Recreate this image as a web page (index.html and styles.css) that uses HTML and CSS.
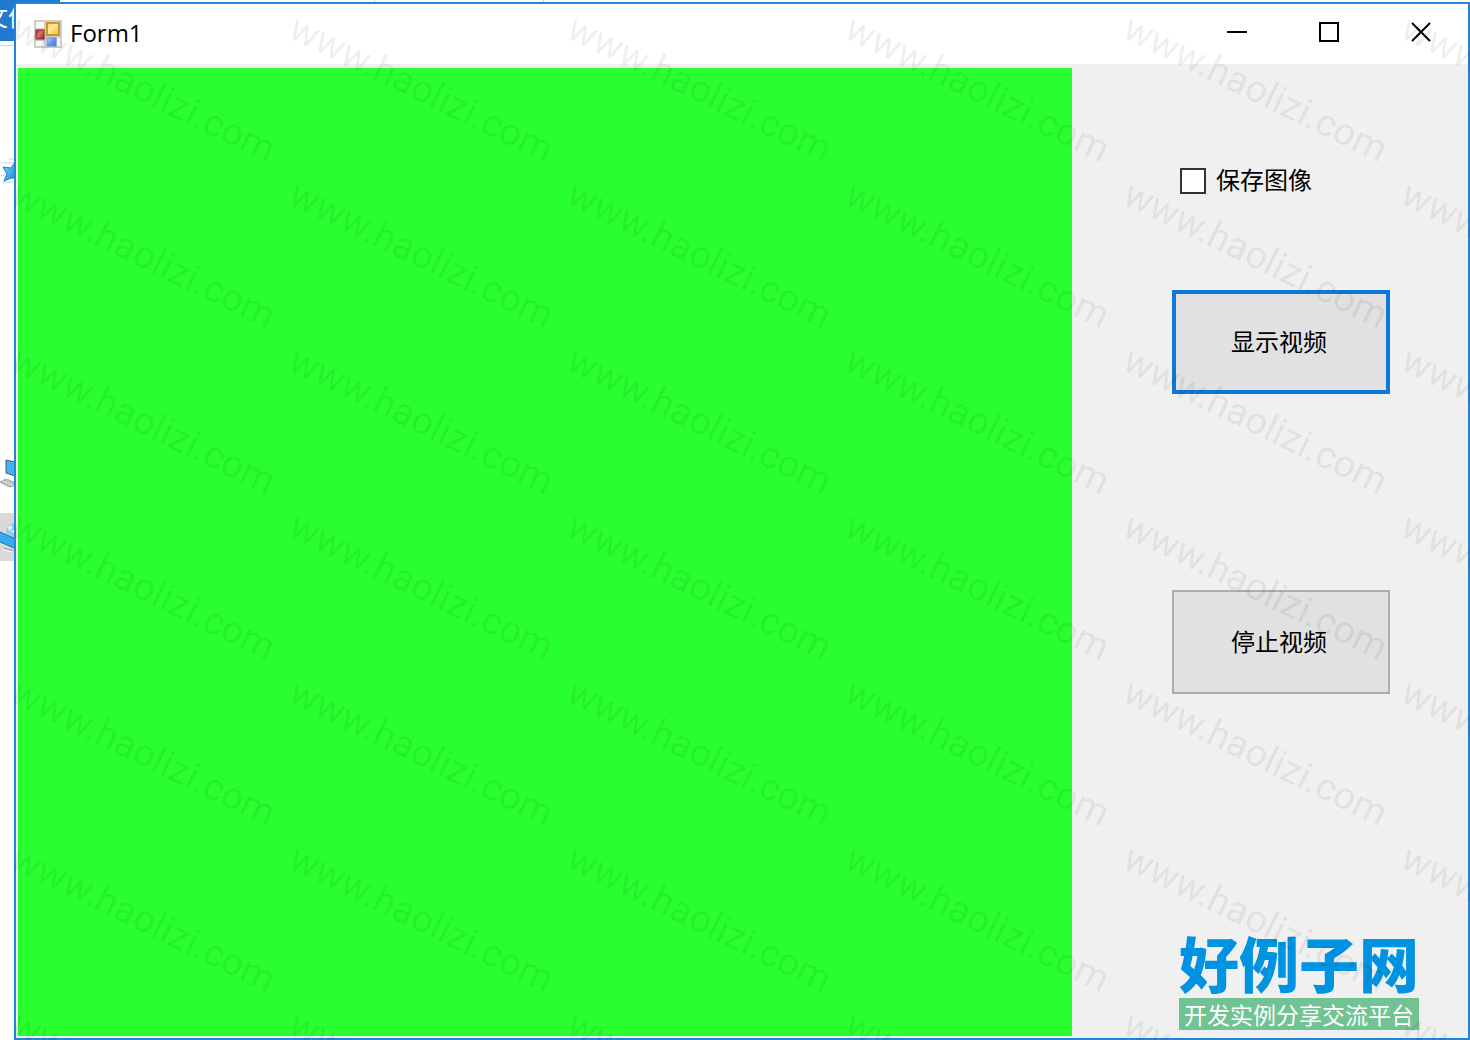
FILE: index.html
```html
<!DOCTYPE html>
<html lang="zh-CN">

<head>
  <meta charset="utf-8">
  <title>Form1</title>
  <link rel="stylesheet" href="styles.css">
</head>

<body>

  <!-- File explorer behind the form, only its left edge is visible. -->
  <div class="explorer">
    <div class="tabs">
      <span class="tab-file">文件</span>
      <span class="tab"></span>
      <span class="tab"></span>
    </div>
    <div class="tree">
      <svg class="tree-icon quick" viewBox="0 0 14 48" aria-hidden="true">
        <defs>
          <linearGradient id="sky" x1="0" y1="0" x2="1" y2="1">
            <stop offset="0" stop-color="#7fd4fb" />
            <stop offset="1" stop-color="#168fe0" />
          </linearGradient>
        </defs>
        <path d="M9 13h5M1 17h13M0 29h5M2 36h12" stroke="#b5d9f1" />
        <path d="M3 21l8 1 4-6v16l-4 0-7 3 3-7z" fill="url(#sky)" stroke="#1c7fc4" />
      </svg>
      <svg class="tree-icon pc" viewBox="0 0 14 48" aria-hidden="true">
        <path d="M6 12l9 2v14l-9-3z" fill="#3fb4f5" stroke="#4a5a66" />
        <path d="M0 34l6-3 8 3v4l-5 1z" fill="#d5d9dc" stroke="#a4abb0" />
        <path d="M1 34l10 4M4 32l10 4" stroke="#8f979d" stroke-dasharray="2 1" />
      </svg>
      <svg class="tree-icon network" viewBox="0 0 14 48" aria-hidden="true">
        <path d="M14 10q-8 2-8 10l8 4z" fill="#8dccea" />
        <path d="M8 14l3-2 1 3-3 3zM11 18l3-1v3z" fill="#e6f6fd" />
        <path d="M0 19l14 6v10l-14-6z" fill="#35abf2" />
        <path d="M0 19l14 6M0 29l14 6" stroke="#2c6f9e" fill="none" />
        <path d="M4 35l10 3" stroke="#8b959b" />
        <path d="M3 37l11 2" stroke="#f7f7f7" />
      </svg>
    </div>
  </div>

  <main class="window">
    <header class="titlebar">
      <svg class="app-icon" viewBox="0 0 28 28" aria-hidden="true">
        <defs>
          <linearGradient id="gold" x1="0" y1="0" x2="1" y2="1">
            <stop offset="0" stop-color="#f5cf58" />
            <stop offset=".4" stop-color="#ffe999" />
            <stop offset="1" stop-color="#eeb52c" />
          </linearGradient>
          <linearGradient id="red" x1="0" y1="0" x2="1" y2="1">
            <stop offset="0" stop-color="#b8231f" />
            <stop offset=".4" stop-color="#dd7a70" />
            <stop offset="1" stop-color="#a41613" />
          </linearGradient>
          <linearGradient id="blue" x1="0" y1="0" x2="1" y2="1">
            <stop offset="0" stop-color="#a9c9fb" />
            <stop offset="1" stop-color="#3f78dc" />
          </linearGradient>
        </defs>
        <rect x="1" y="1" width="26" height="26" fill="#f8f8f8" stroke="#cdcdcd" stroke-width="2" />
        <path d="M11 1v26M1 9h11M1 20h11M11 17h16M22 17v10" stroke="#cdcdcd" stroke-width="2" />
        <rect x="13" y="3" width="12" height="12" fill="url(#gold)" stroke="#c9992b" stroke-width="2" />
        <rect x="2" y="10" width="8" height="9" fill="url(#red)" stroke="#97201c" />
        <rect x="13" y="18" width="9" height="8" fill="url(#blue)" stroke="#6d94dc" />
      </svg>
      <h1 class="caption">Form1</h1>
      <button class="caption-btn" type="button" aria-label="Minimize">
        <svg viewBox="0 0 20 20"><path d="M0 10h20" /></svg>
      </button>
      <button class="caption-btn" type="button" aria-label="Maximize">
        <svg viewBox="0 0 20 20"><path d="M1 1h18v18H1z" /></svg>
      </button>
      <button class="caption-btn" type="button" aria-label="Close">
        <svg viewBox="0 0 20 20"><path d="M1 1l18 18M19 1L1 19" /></svg>
      </button>
    </header>

    <div class="client">
      <div class="video"></div>

      <div class="panel">
        <label class="check" for="saveImage">
          <input id="saveImage" type="checkbox">
          <span>保存图像</span>
        </label>
        <button class="btn btn-default" type="button">显示视频</button>
        <button class="btn" type="button">停止视频</button>

        <div class="brand">
          <div class="brand-name">好例子网</div>
          <div class="brand-slogan">开发实例分享交流平台</div>
        </div>
      </div>
    </div>
  </main>

  <div class="watermark" aria-hidden="true">
    <span>www.haolizi.com</span><span>www.haolizi.com</span><span>www.haolizi.com</span><span>www.haolizi.com</span><span>www.haolizi.com</span><span>www.haolizi.com</span>
    <span>www.haolizi.com</span><span>www.haolizi.com</span><span>www.haolizi.com</span><span>www.haolizi.com</span><span>www.haolizi.com</span><span>www.haolizi.com</span>
    <span>www.haolizi.com</span><span>www.haolizi.com</span><span>www.haolizi.com</span><span>www.haolizi.com</span><span>www.haolizi.com</span><span>www.haolizi.com</span>
    <span>www.haolizi.com</span><span>www.haolizi.com</span><span>www.haolizi.com</span><span>www.haolizi.com</span><span>www.haolizi.com</span><span>www.haolizi.com</span>
    <span>www.haolizi.com</span><span>www.haolizi.com</span><span>www.haolizi.com</span><span>www.haolizi.com</span><span>www.haolizi.com</span><span>www.haolizi.com</span>
    <span>www.haolizi.com</span><span>www.haolizi.com</span><span>www.haolizi.com</span><span>www.haolizi.com</span><span>www.haolizi.com</span><span>www.haolizi.com</span>
    <span>www.haolizi.com</span><span>www.haolizi.com</span><span>www.haolizi.com</span><span>www.haolizi.com</span><span>www.haolizi.com</span><span>www.haolizi.com</span>
  </div>

</body>

</html>
```
FILE: styles.css
```css
* {
  box-sizing: border-box;
}

body {
  position: relative;
  display: flex;
  min-height: 100vh;
  margin: 0;
  padding: 2px 0 0 14px;
  overflow: hidden;
  background: #fff;
  color: #000;
  font-family: "Open Sans", "Noto Sans CJK SC", sans-serif;
  font-size: 24px;
}

/* Explorer behind the form */
.explorer {
  position: absolute;
  inset: 0;
}

.tabs {
  display: flex;
  height: 46px;
  border-bottom: 1px solid #d5d5d5;
}

.tab-file {
  display: flex;
  flex: none;
  justify-content: flex-end;
  width: 60px;
  height: 41px;
  padding-right: 28px;
  background: #1f7ad0;
  color: #fff;
  line-height: 34px;
  white-space: nowrap;
}

.tab {
  width: 315px;
  border-right: 1px solid #c8c8c8;
}

.tab + .tab {
  width: 169px;
}

.tree {
  display: flex;
  flex-direction: column;
  width: 14px;
  padding-top: 100px;
}

.tree-icon {
  width: 14px;
  height: 48px;
  fill: none;
}

.pc {
  margin-top: 254px;
}

.network {
  margin-top: 17px;
  background: #d9d9d9;
}

/* Form */
.window {
  position: relative;
  display: flex;
  flex: 1;
  flex-direction: column;
  border: 2px solid #2484d6;
  background: #f0f0f0;
}

.titlebar {
  display: flex;
  align-items: center;
  height: 60px;
  padding: 0 1px 0 18px;
  background: #fff;
}

.app-icon {
  width: 28px;
  height: 28px;
}

.caption {
  flex: 1;
  margin: 0 0 0 8px;
  padding-bottom: 4px;
  font-size: 24px;
  font-weight: 400;
}

.caption-btn {
  display: flex;
  align-items: center;
  justify-content: center;
  align-self: stretch;
  width: 92px;
  padding: 0 0 4px;
  border: 0;
  background: none;
}

.caption-btn svg {
  width: 20px;
  height: 20px;
  fill: none;
  stroke: #000;
  stroke-width: 2;
}

.client {
  display: flex;
  flex: 1;
  padding: 4px 0 2px 2px;
}

.video {
  flex: 1;
  background: #29ff2f;
}

.panel {
  display: flex;
  flex-direction: column;
  align-items: flex-start;
  width: 396px;
  padding: 94px 0 6px 100px;
}

.check {
  display: flex;
  align-items: center;
  gap: 10px;
  height: 38px;
  margin: 0 0 90px 8px;
}

.check span {
  padding-bottom: 6px;
}

.check input {
  appearance: none;
  width: 26px;
  height: 26px;
  margin: 0;
  border: 2px solid #333;
  background: #fff;
}

.check input:checked {
  box-shadow: inset 0 0 0 4px #fff;
  background: #333;
}

.btn {
  width: 218px;
  height: 104px;
  padding: 0 4px 4px 0;
  border: 2px solid #adadad;
  background: #e1e1e1;
  color: #000;
  font: inherit;
}

.btn-default {
  margin-bottom: 196px;
  border: 4px solid #0f78d7;
}

.brand {
  width: 240px;
  margin: auto 0 0 7px;
  font-family: "Noto Sans CJK SC", sans-serif;
  white-space: nowrap;
}

.brand-name {
  padding-bottom: 4px;
  color: #0093e2;
  font-size: 60px;
  font-weight: 900;
  line-height: 64px;
}

.brand-slogan {
  background: #72c394;
  color: #fff;
  font-size: 23px;
  line-height: 32px;
  text-align: center;
}

/* Tiled text over everything, clicks pass through */
.watermark {
  position: absolute;
  inset: 0;
  display: grid;
  grid-template-columns: repeat(6, 278px);
  grid-auto-rows: 166px;
  padding: 4px 0 0 9px;
  overflow: hidden;
  color: rgba(0, 0, 0, 0.08);
  font-family: Roboto, sans-serif;
  font-size: 38px;
  line-height: 40px;
  pointer-events: none;
}

.watermark span {
  justify-self: start;
  align-self: start;
  transform: rotate(26deg);
  transform-origin: 0 32px;
}
```
